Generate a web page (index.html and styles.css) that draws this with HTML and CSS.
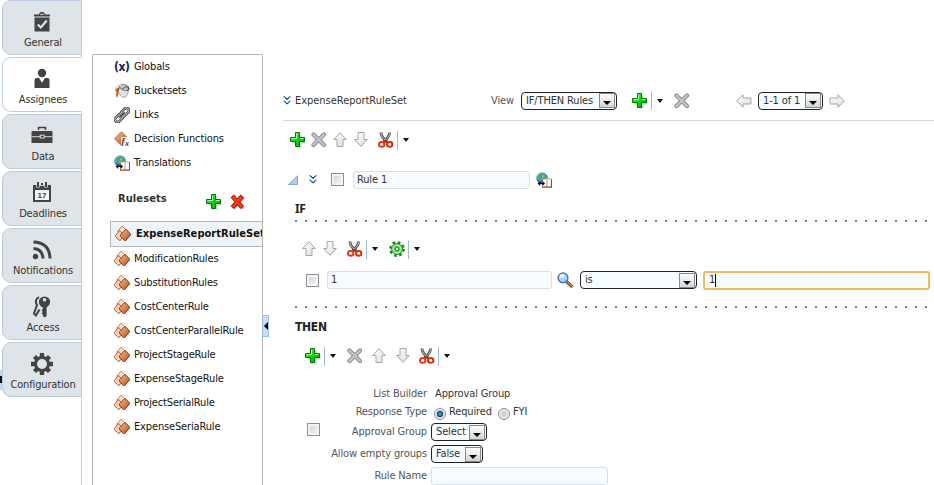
FILE: index.html
```html
<!DOCTYPE html>
<html lang="en">
<head>
<meta charset="utf-8">
<title>Assignees</title>
<link rel="stylesheet" href="styles.css">
</head>
<body>
<svg class="defs" aria-hidden="true">
  <defs>
    <linearGradient id="g-green" x1="0" y1="0" x2="1" y2="1"><stop offset="0" stop-color="#5f5"/><stop offset=".5" stop-color="#0fd20f"/><stop offset="1" stop-color="#0a0"/></linearGradient>
    <linearGradient id="g-brown" x1="0" y1="0" x2="1" y2="1"><stop offset="0" stop-color="#f3c09a"/><stop offset="1" stop-color="#b04a12"/></linearGradient>
    <linearGradient id="g-gray" x1="0" y1="0" x2="1" y2="1"><stop offset="0" stop-color="#fff"/><stop offset="1" stop-color="#dcdcdc"/></linearGradient>
    <radialGradient id="g-globe" cx=".4" cy=".3" r=".8"><stop offset="0" stop-color="#c9ecff"/><stop offset=".5" stop-color="#3f90cc"/><stop offset="1" stop-color="#0f3b80"/></radialGradient>
  </defs>
  <symbol id="plus" viewBox="0 0 16 16"><path d="M6.5 2.500h5v4h4v5h-4v4h-5v-4h-4v-5h4z" fill="#999" opacity=".55"/><path d="M5.500.500h4v5h5v4h-5v5h-4v-5h-5v-4h5z" fill="url(#g-green)" stroke="#087008"/><path d="M6.500 1.500v5h-5M10 6.500h3.500" fill="none" stroke="#9f9"/></symbol>
  <symbol id="cross" viewBox="0 0 16 16"><path d="M2.500 2.500l10.500 10.500M13 2.500l-10.500 10.500" stroke="#8b8b8b" stroke-width="4.200" stroke-linecap="round"/><path d="M2.500 2.500l10.500 10.500M13 2.500l-10.500 10.500" stroke="#c4c4c4" stroke-width="2.400" stroke-linecap="round"/></symbol>
  <symbol id="redcross" viewBox="0 0 16 16"><path d="M3.500 3.500l10 11M13.500 3.500l-10 11" stroke="#aaa" stroke-width="3"/><path d="M2.300 2l10 11.500M12.300 2l-10 11.500" stroke="#a11506" stroke-width="4.400"/><path d="M2.800 2.600l9 10.300M11.800 2.600l-9 10.300" stroke="#ff3c14" stroke-width="2.600"/></symbol>
  <symbol id="up" viewBox="0 0 16 16"><path d="M8 .700l6.300 6.800h-3.300v7h-6v-7h-3.300z" fill="url(#g-gray)" stroke="#a6a6a6"/></symbol>
  <symbol id="down" viewBox="0 0 16 16"><path d="M5 .500h6v7h3.300l-6.300 6.800-6.300-6.800h3.300z" fill="url(#g-gray)" stroke="#a6a6a6"/></symbol>
  <symbol id="left" viewBox="0 0 16 16"><path d="M.700 8l6.300-6.200v3.200h8v6h-8v3.200z" fill="url(#g-gray)" stroke="#a6a6a6"/></symbol>
  <symbol id="right" viewBox="0 0 16 16"><path d="M15.300 8l-6.300-6.200v3.200h-8v6h8v3.200z" fill="url(#g-gray)" stroke="#a6a6a6"/></symbol>
  <symbol id="cut" viewBox="0 0 16 16"><path d="M3 .500c-.300 3.500 2 6 6 9.500M11.500.500c.300 3.500-2 6-6 9.500" fill="none" stroke="#555" stroke-width="2.800"/><path d="M3 1.300c0 3 2 4.800 4.200 6.700M11.500 1.300c0 3-2 4.800-4.200 6.700" fill="none" stroke="#c9c9c9"/><path d="M5.500 9.500h4" stroke="#a20" stroke-width="2"/><ellipse cx="3.700" cy="12.400" rx="2.700" ry="2.300" fill="#fff" stroke="#e53a12" stroke-width="2"/><ellipse cx="11.700" cy="12.400" rx="2.700" ry="2.300" fill="#fff" stroke="#d92c08" stroke-width="2"/></symbol>
  <symbol id="cog" viewBox="0 0 16 16"><circle cx="8" cy="8" r="6.500" fill="none" stroke="#158a15" stroke-width="2.800" stroke-dasharray="2.600 2.500"/><circle cx="8" cy="8" r="5.400" fill="#a5eea0" stroke="#148a14"/><circle cx="8" cy="8" r="3.300" fill="#76d472"/><circle cx="8" cy="8" r="1.900" fill="#fff" stroke="#117a11"/></symbol>
  <symbol id="globe" viewBox="0 0 16 16"><circle cx="6" cy="6" r="5.700" fill="url(#g-globe)"/><path d="M3 2l4-1 1 2-2 1 1 2-3 1-2-2zM8 5l3-2 .500 3-2 2-2-1z" fill="#58a84a"/><path d="M6.500 7.200l4.500-.700 4.500.700v8l-4.500-.400-4.500.400z" fill="#fafafa" stroke="#8a8a8a" stroke-width=".7"/><path d="M11 7v8" stroke="#aaa"/><path d="M6 15.300l5-.300 4.600.300v-8" fill="none" stroke="#b22c2c"/><path d="M2.500 11.500h5.500" stroke="#111" stroke-width="1.200"/><path d="M4.300 9l-2.800 2.500 2.800 2.500zM6.300 9l2.800 2.500-2.800 2.500z" fill="#111"/></symbol>
  <symbol id="rule" viewBox="0 0 16 16"><path d="M6.500.700h1.500l3.700 3.800-4.700 5.500-4-3.500v-1.500z" fill="#ffe9d9" stroke="#a56b48" stroke-width=".9"/><path d="M4.700 4.500l4.300 4.500-3.500 5.300h-1.500l-3.500-3.800v-1.200z" fill="#f6cdb0" stroke="#9a5730" stroke-width=".9"/><path d="M10.200 3.700h1.500l3.800 4.300v1l-4.700 5.500h-1.300l-4-4.300v-1.200z" fill="url(#g-brown)" stroke="#7c3611" stroke-width=".9"/></symbol>
  <symbol id="lens" viewBox="0 0 17 17"><path d="M9 9l6.500 6" stroke="#865038" stroke-width="3.200"/><path d="M9.500 9l6 5.500" stroke="#dca98e"/><circle cx="6" cy="5.800" r="4.900" fill="#aad2fa" stroke="#3b68b8" stroke-width="1.300"/><ellipse cx="5" cy="4" rx="2.600" ry="2" fill="#e6f4ff"/></symbol>
  <symbol id="chev" viewBox="0 0 8 9"><path d="M.500.800h1l2.500 2.300 2.500-2.300h1M1.500 1.300l2.500 2.300 2.500-2.300M.500 5.300h1l2.500 2.300 2.500-2.300h1M1.500 5.800l2.500 2.300 2.500-2.300" fill="none" stroke="#0b3b9d"/></symbol>
  <symbol id="bucket" viewBox="0 0 16 16"><path d="M5.500 3.500l-1.500 6 4.500 4.800q4 .500 5-3l1.700-5.300z" fill="#e4e4e4" stroke="#909090" stroke-width=".8"/><ellipse cx="10.300" cy="4.500" rx="5" ry="2.900" transform="rotate(18 10.300 4.500)" fill="#c4c4c4" stroke="#777" stroke-width=".8"/><path d="M8 6.500l4-3 3 1.500-2 3" stroke="#444" fill="none" stroke-width=".9"/><path d="M8 2.200c-5-.500-6.500 2-6.700 5" fill="none" stroke="#d5d5d5" stroke-width="1.300"/><path d="M.800 8c1.500-2.500 3-3.500 5-4-1.300 3-.800 7-2.800 10.500-1.500-.500-.500-4-.700-6.500z" fill="#cf5a12"/></symbol>
  <symbol id="link" viewBox="0 0 16 16"><g fill="none" transform="rotate(-45 8 8)"><g stroke="#555" stroke-width="2.800"><rect x="-.800" y="5.500" width="9" height="5" rx="2.500"/><rect x="7.800" y="5.500" width="9" height="5" rx="2.500"/></g><g stroke="#d4d4d4" stroke-width=".9"><rect x="-.800" y="5.500" width="9" height="5" rx="2.500"/><rect x="7.800" y="5.500" width="9" height="5" rx="2.500"/></g><path d="M4 8h8" stroke="#444" stroke-width="1.400"/></g></symbol>
</svg>

<div class="app">
  <nav class="rail">
    <a class="tab"><svg class="tabicon" viewBox="0 0 24 24"><path d="M4 4.500h4.500l2-2.500h3l2 2.500h4.500v2h-16zM4.500 7.500h15v14h-15z" fill="#434343"/><path d="M10 4.300h4" stroke="#dfe4e8" stroke-width=".9"/><path d="M7.800 14.500l3 3 6-7" fill="none" stroke="#dfe4e8" stroke-width="2.200"/></svg><span>General</span></a>
    <a class="tab active"><svg class="tabicon" viewBox="0 0 24 24"><circle cx="12" cy="6" r="4.200" fill="#434343"/><path d="M4.500 21v-8q0-2 2-2h2.500l3 4.800 3-4.800h2.500q2 0 2 2v8z" fill="#434343"/></svg><span>Assignees</span></a>
    <a class="tab"><svg class="tabicon" viewBox="0 0 24 24"><path d="M8.500 6v-2.500h7v2.500" fill="none" stroke="#434343" stroke-width="1.600"/><path d="M2.500 7h19q1 0 1 1v11h-21v-11q0-1 1-1z" fill="#434343"/><path d="M1.500 12.700h21" stroke="#e8eaec" stroke-width=".9"/><rect x="10.200" y="11.200" width="4" height="2.800" fill="#434343" stroke="#e8eaec" stroke-width=".9"/></svg><span>Data</span></a>
    <a class="tab"><svg class="tabicon" viewBox="0 0 24 24"><path d="M3 4h18v17h-18z" fill="#434343"/><path d="M5 9h14v10h-14z" fill="#f2f4f5"/><path d="M8 1.500v5M16 1.500v5M12 2v3" stroke="#dfe4e8" stroke-width="3.500"/><path d="M8 1v5M16 1v5M12 2v2" stroke="#434343" stroke-width="2"/><text x="7.500" y="17" class="cal">17</text></svg><span>Deadlines</span></a>
    <a class="tab"><svg class="tabicon" viewBox="0 0 24 24"><circle cx="5.500" cy="18.500" r="2.700" fill="#434343"/><path d="M3.500 10.500q9 .500 9.500 10M3.500 4q16 .500 16.500 16.500" fill="none" stroke="#434343" stroke-width="3"/></svg><span>Notifications</span></a>
    <a class="tab"><svg class="tabicon" viewBox="0 0 24 24"><path d="M9 2.200q-5 2.500-2 7.800l-3 8.500 2 2 3.500-6" fill="none" stroke="#434343" stroke-width="2"/><circle cx="14.500" cy="7" r="5.600" fill="#434343"/><circle cx="14.500" cy="4.800" r="1.800" fill="#dfe4e8"/><path d="M12.800 11h3.800v10l-1.800 1.500-2-1.500v-1.500l-1.300-1 1.300-1.500-1.300-1.500 1.300-1.500z" fill="#434343"/></svg><span>Access</span></a>
    <a class="tab"><svg class="tabicon" viewBox="0 0 24 24"><g stroke="#434343" stroke-width="4.400"><path d="M12 1v22M1 12h22M4.500 4.500l15 15M19.500 4.500l-15 15"/></g><circle cx="12" cy="12" r="8" fill="#434343"/><circle cx="12" cy="12" r="5" fill="#dfe4e8"/></svg><span>Configuration</span></a>
    <i class="edge"></i>
  </nav>

  <aside class="side">
    <div class="panel">
      <ul class="list">
        <li><b class="var">(x)</b><span>Globals</span></li>
        <li><svg class="ic"><use href="#bucket"/></svg><span>Bucketsets</span></li>
        <li><svg class="ic"><use href="#link"/></svg><span>Links</span></li>
        <li><svg class="ic" viewBox="0 0 16 16"><path d="M7.500.700l7 7-7 7-7-7z" fill="url(#g-brown)" stroke="#c07248"/><rect x="7" y="6" width="8.500" height="10" fill="#fff" opacity=".85"/><text x="7.500" y="13" class="fx">f</text><text x="11" y="15" class="fx small">x</text></svg><span>Decision Functions</span></li>
        <li><svg class="ic"><use href="#globe"/></svg><span>Translations</span></li>
      </ul>
      <div class="sethead"><b>Rulesets</b><svg class="ic"><use href="#plus"/></svg><svg class="ic"><use href="#redcross"/></svg></div>
      <ul class="list sets">
        <li class="sel"><svg class="ic"><use href="#rule"/></svg><span>ExpenseReportRuleSet</span></li>
        <li><svg class="ic"><use href="#rule"/></svg><span>ModificationRules</span></li>
        <li><svg class="ic"><use href="#rule"/></svg><span>SubstitutionRules</span></li>
        <li><svg class="ic"><use href="#rule"/></svg><span>CostCenterRule</span></li>
        <li><svg class="ic"><use href="#rule"/></svg><span>CostCenterParallelRule</span></li>
        <li><svg class="ic"><use href="#rule"/></svg><span>ProjectStageRule</span></li>
        <li><svg class="ic"><use href="#rule"/></svg><span>ExpenseStageRule</span></li>
        <li><svg class="ic"><use href="#rule"/></svg><span>ProjectSerialRule</span></li>
        <li><svg class="ic"><use href="#rule"/></svg><span>ExpenseSeriaRule</span></li>
      </ul>
    </div>
    <i class="handle"></i>
  </aside>

  <main class="main">
    <header class="head">
      <div class="title"><svg class="chev"><use href="#chev"/></svg><span>ExpenseReportRuleSet</span></div>
      <div class="view"><span>View</span><div class="select s-view"><span>IF/THEN Rules</span><i></i></div></div>
      <div class="split"><svg class="ic"><use href="#plus"/></svg><i class="bar"></i><i class="caret"></i></div>
      <svg class="ic del"><use href="#cross"/></svg>
      <div class="pager"><svg class="ic"><use href="#left"/></svg><div class="select s-page"><span>1-1 of 1</span><i></i></div><svg class="ic"><use href="#right"/></svg></div>
    </header>

    <div class="tools t1">
      <svg class="ic"><use href="#plus"/></svg><svg class="ic"><use href="#cross"/></svg><svg class="ic"><use href="#up"/></svg><svg class="ic"><use href="#down"/></svg>
      <div class="split"><svg class="ic"><use href="#cut"/></svg><i class="bar"></i><i class="caret"></i></div>
    </div>

    <div class="rule">
      <svg class="tri" viewBox="0 0 10 10"><path d="M9.500.800v8.700h-9z" fill="#b5cde0" stroke="#8ea9c2"/></svg>
      <svg class="chev"><use href="#chev"/></svg>
      <i class="check"></i>
      <div class="input rulename">Rule 1</div>
      <svg class="ic"><use href="#globe"/></svg>
    </div>

    <h2 class="if">IF</h2>
    <div class="dots"></div>
    <div class="tools t2">
      <svg class="ic"><use href="#up"/></svg><svg class="ic"><use href="#down"/></svg>
      <div class="split"><svg class="ic"><use href="#cut"/></svg><i class="bar"></i><i class="caret"></i></div>
      <div class="split"><svg class="ic"><use href="#cog"/></svg><i class="bar"></i><i class="caret"></i></div>
    </div>
    <div class="cond">
      <i class="check"></i>
      <div class="input operand">1</div>
      <svg class="lens"><use href="#lens"/></svg>
      <div class="select s-op"><span>is</span><i></i></div>
      <div class="input focus">1<i class="cursor"></i></div>
    </div>
    <div class="dots"></div>
    <h2 class="then">THEN</h2>
    <div class="tools t3">
      <div class="split"><svg class="ic"><use href="#plus"/></svg><i class="bar"></i><i class="caret"></i></div>
      <svg class="ic"><use href="#cross"/></svg><svg class="ic"><use href="#up"/></svg><svg class="ic"><use href="#down"/></svg>
      <div class="split"><svg class="ic"><use href="#cut"/></svg><i class="bar"></i><i class="caret"></i></div>
    </div>

    <div class="action">
      <i class="check"></i>
      <div class="form">
        <label>List Builder</label><div class="plain">Approval Group</div>
        <label>Response Type</label><div class="radios"><i class="radio on"></i><span class="req">Required</span><i class="radio"></i><span>FYI</span></div>
        <label>Approval Group</label><div class="select s-group"><span>Select</span><i></i></div>
        <label>Allow empty groups</label><div class="select s-bool"><span>False</span><i></i></div>
        <label>Rule Name</label><div class="input name"></div>
      </div>
    </div>
  </main>
</div>
</body>
</html>
```
FILE: styles.css
```css
* { box-sizing: border-box; }
body { margin: 0; background: #fff; color: #222; font: 11px/14px "DejaVu Sans Condensed", "DejaVu Sans", sans-serif; font-stretch: condensed; letter-spacing: -0.14px; overflow: hidden; }
i { font-style: normal; display: block; flex: none; }
svg { flex: none; display: block; }
.defs { position: absolute; width: 0; height: 0; }
.app { display: flex; height: 485px; overflow: hidden; white-space: nowrap; }

.rail { position: relative; width: 82px; padding-left: 2px; display: flex; flex-direction: column; gap: 2px; border-right: 1px solid #c6d3e1; }
.tab { flex: none; width: 80px; height: 55px; display: flex; flex-direction: column; align-items: center; padding: 9px 0 0 2px; background: #dfe4e8; border: 1px solid #bccbdf; border-radius: 9px 0 0 9px; color: #333; letter-spacing: -0.15px; }
.tab.active { background: #fff; border-right-color: #fff; }
.tabicon { width: 24px; height: 24px; margin: 0 2px 2px 0; }
.cal { font: bold 8px "Liberation Sans", sans-serif; fill: #434343; letter-spacing: 0; }
.edge { position: absolute; left: 0; top: 370px; width: 2px; height: 20px; background: linear-gradient(#bdd8f5 6px, #111 6px, #111 13px, #bdd8f5 13px); }

.side { position: relative; width: 171px; margin: 54px 0 0 10px; }
.panel { height: 431px; border: 1px solid #b5b5b5; border-bottom: 0; border-radius: 2px 2px 0 0; overflow: hidden; }
.list { list-style: none; margin: 0; padding: 0; color: #111; }
.list li { display: flex; align-items: center; height: 24px; padding-left: 21px; gap: 4px; letter-spacing: -0.15px; }
.ic { width: 16px; height: 16px; }
.var { width: 16px; color: #241c48; font: bold 12px/14px "DejaVu Sans Condensed", sans-serif; letter-spacing: -.5px; }
.fx { font: italic bold 9px "Liberation Serif", serif; fill: #333; letter-spacing: 0; }
.fx.small { font-size: 8px; }
.sethead { display: flex; align-items: center; height: 46px; padding-left: 25px; color: #333; letter-spacing: .1px; }
.sethead b { width: 88px; margin-top: 1px; }
.sethead .ic { margin: 8px 8px 0 0; }
.list li.sel { height: 26px; margin: 0 -2px 0 17px; padding-left: 4px; gap: 5px; font-weight: bold; letter-spacing: .05px; background: #eef3f7; border: 1px solid #b3b8bd; }
.handle { position: absolute; left: 170px; top: 261px; width: 7px; height: 22px; background: #c6ddf6; border: 1px solid #9dbfe5; }
.handle::after { content: ""; display: block; margin: 6px 0 0 0; border: 4px solid transparent; border-left: 0; border-right: 4px solid #000; }

.main { width: 671px; padding-left: 19px; color: #333; }
.head { display: flex; align-items: center; height: 121px; margin-left: 1px; padding-top: 81px; border-bottom: 1px solid #cfdae4; }
.title { display: flex; align-items: center; width: 208px; gap: 4px; letter-spacing: -0.03px; }
.chev { width: 8px; height: 9px; }
.view { display: flex; align-items: center; width: 141px; }
.view > span { width: 30px; color: #555; }
.select { display: flex; align-items: center; justify-content: space-between; height: 18px; padding: 0 1px 0 4px; background: #f7fcff; border: 1px solid #222; border-radius: 4px; }
.select > i { width: 16px; height: 15px; border: 1px solid #888; background: linear-gradient(#fff, #d4d4d4); }
.select > i::after { content: ""; display: block; margin: 7px 0 0 3px; width: 0; border: 4px solid transparent; border-bottom: 0; border-top-color: #000; }
.s-view { width: 96px; }
.s-page { width: 65px; }
.split { display: flex; align-items: center; width: 32px; }
.bar { width: 1px; height: 19px; margin: 0 5px 0 3px; background: #9dbbd5; }
.caret { border: 3.5px solid transparent; border-bottom: 0; border-top: 4px solid #111; }
.del { margin-left: 10px; }
.pager { display: flex; align-items: center; gap: 6px; margin-left: 46px; }
.tools { display: flex; align-items: center; height: 38px; }
.t1 { gap: 5px; padding-left: 8px; }
.t1 .split { margin-left: 4px; }
.t2 { gap: 5px; padding-left: 19px; height: 54px; }
.t2 .split { margin-left: 4px; }
.t2 .split + .split { margin-left: 5px; }
.t3 { gap: 8px; padding-left: 23px; }
.t3 .split:first-child { margin-right: 2px; }
.rule { display: flex; align-items: center; height: 41px; padding-left: 6px; }
.tri { width: 10px; height: 10px; margin-right: 11px; }
.check { width: 13px; height: 13px; border: 1px solid #8b8f94; background: linear-gradient(135deg, #ccd1d7, #f6f6f6); box-shadow: inset 0 0 0 2px #f4f4f4; }
.rule .check { margin: 0 9px 0 14px; }
.input { height: 18px; padding: 1px 3px; background: #f7fcff; border: 1px solid #d9e1e8; border-radius: 3px; }
.rulename { width: 177px; margin-right: 6px; }
h2 { margin: 0 0 0 13px; font-size: 12px; line-height: 14px; letter-spacing: -.3px; color: #222; }
.if { padding-top: 2px; height: 20px; font: bold 12px/14px "Noto Sans", sans-serif; letter-spacing: -.3px; }
.dots { margin-left: 13px; width: 636px; height: 2px; background: repeating-linear-gradient(90deg, #777 0 2px, transparent 2px 10px); }
.cond { display: flex; align-items: center; height: 8px; margin: 0 0 22px 24px; }
.cond .check { margin-right: 8px; }
.operand { width: 225px; }
.lens { width: 17px; height: 17px; margin: 0 6px 0 5px; }
.s-op { width: 117px; margin-right: 6px; }
.focus { display: flex; width: 227px; height: 19px; padding: 0 0 0 4px; border: 2px solid #edbc62; }
.cursor { width: 1px; height: 13px; margin-top: 1px; background: #000; }
.then { padding-top: 12px; height: 29px; }
.action { position: relative; display: flex; align-items: flex-start; padding-left: 25px; margin-top: 9px; }
.action .check { margin-top: 39px; }
.form { display: grid; grid-template-columns: 107px 177px; grid-template-rows: 20px 15px 26px 18px 26px; column-gap: 4px; align-items: center; }
.form label { text-align: right; color: #555; }
.plain { padding-left: 4px; }
.radios { display: flex; align-items: center; padding-left: 3px; height: 15px; }
.radio { width: 12px; height: 12px; margin: 5px 3px 0 0; border: 1px solid #8c8c8c; border-radius: 50%; background: radial-gradient(#d2d2d2 30%, #fff 80%); }
.radio.on { background: radial-gradient(circle, #3bb2e8 0, #124b78 42%, #eee 52%); }
.req { width: 49px; }
.s-group { width: 56px; }
.s-bool { width: 52px; }
.name { width: 177px; }
```
